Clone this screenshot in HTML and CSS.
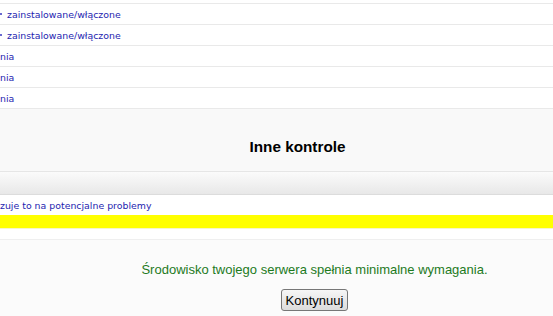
FILE: index.html
```html
<!DOCTYPE html>
<html lang="pl">
<head>
  <meta charset="UTF-8" />
  <title>Instalacja - sprawdzenie środowiska</title>
  <link rel="stylesheet" href="styles.css">
</head>
<body>
  <div class="page">
    <div class="checks">
      <div class="row row-cut"></div>
      <div class="row"><span class="cell cell-long">zainstalowane/włączone</span></div>
      <div class="row"><span class="cell cell-long">zainstalowane/włączone</span></div>
      <div class="row"><span class="cell">nia</span></div>
      <div class="row"><span class="cell">nia</span></div>
      <div class="row"><span class="cell">nia</span></div>
    </div>

    <!-- Other checks -->
    <div class="section-head">
      <h2>Inne kontrole</h2>
    </div>
    <div class="table-head"></div>
    <div class="row row-warn"><span class="cell">zuje to na potencjalne problemy</span></div>
    <div class="warn-bar"></div>
    <div class="spacer"></div>

    <div class="result">
      <p class="ok">Środowisko twojego serwera spełnia minimalne wymagania.</p>
      <button type="button" class="btn">Kontynuuj</button>
    </div>
  </div>
</body>
</html>
```

FILE: styles.css
```css
/* Reset */
* { margin:0; padding:0; box-sizing:border-box }
body { background:#fff; font-family:"DejaVu Sans",Verdana,sans-serif; overflow:hidden; }

.page { width:553px; }

/* Check rows */
.row {
  height:21px; border-bottom:1px solid #e9e9e9;
  display:flex; align-items:center; white-space:nowrap;
}
.row-cut { height:4px; }
.cell { font-size:9.4px; color:#1e1eb0; }
.cell-long { padding-left:7px; }
.cell-long::before {
  content:""; display:inline-block; width:2px; height:2px; background:#6a6ad0;
  margin:0 5px 3px -7px; vertical-align:middle;
}

/* "Inne kontrole" */
.section-head {
  background:#f9f9f9; height:63px; border-bottom:1px solid #e6e6e6;
  padding:28px 0 0 42px; text-align:center;
}
.section-head h2 {
  font-family:"Liberation Sans",Arial,sans-serif; font-size:15.3px; font-weight:bold;
  color:#000; line-height:20px;
}
.table-head {
  height:23px; background:linear-gradient(#fbfbfb, #e8e8e8);
  border-bottom:1px solid #dcdcdc;
}
.row-warn { height:20px; border-bottom:none; }
.warn-bar { height:14px; background:#ffff00; border-bottom:1px solid #f6f6c8; }
.spacer { height:11px; border-bottom:1px solid #efefef; }

/* Result */
.result {
  background:#fbfbfb; height:80px; text-align:center;
  padding:22px 0 0 76px;
  font-family:"Liberation Sans",Arial,sans-serif;
}
.ok { color:#1d7a1d; font-size:13px; line-height:16px; margin-bottom:11px; }
.btn {
  font-family:"Liberation Sans",Arial,sans-serif; font-size:13px; color:#000;
  height:22px; padding:0 4px; border:1px solid #777; border-radius:3px;
  background:linear-gradient(#f6f6f6, #dcdcdc); cursor:pointer;
}
```
